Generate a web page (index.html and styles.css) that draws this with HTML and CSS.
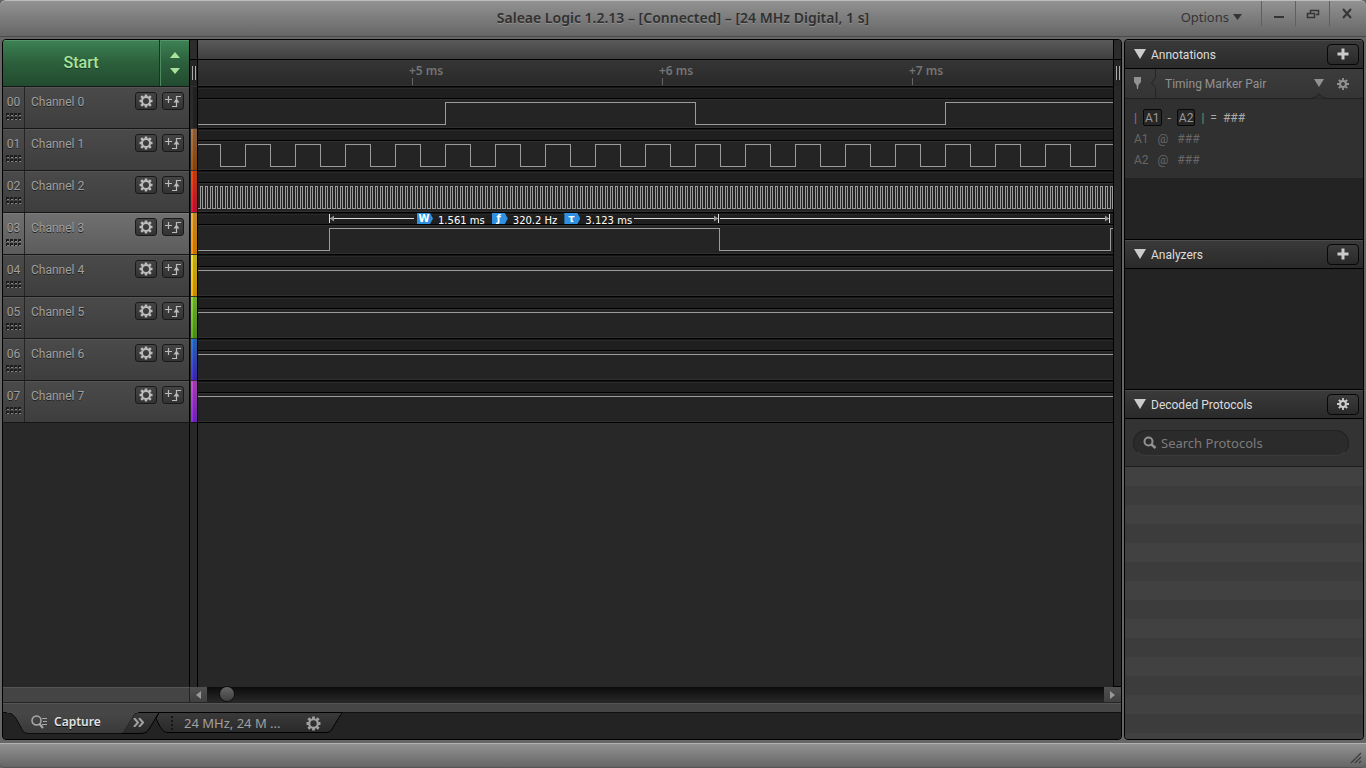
FILE: index.html
```html
<!DOCTYPE html>
<html lang="en">
<head>
<meta charset="utf-8">
<title>Saleae Logic 1.2.13</title>
<link rel="stylesheet" href="styles.css">
</head>
<body>
<svg class="defs" aria-hidden="true">
  <defs>
    <symbol id="gear" viewBox="0 0 14 14">
      <path d="M7 .5v3M7 10.500v3M.5 7h3M10.500 7h3M2.200 2.200l2 2M9.800 9.800l2 2M11.800 2.200l-2 2M4.200 9.800l-2 2" stroke="currentColor" stroke-width="2.600"/>
      <circle cx="7" cy="7" r="4" fill="none" stroke="currentColor" stroke-width="2"/>
    </symbol>
    <symbol id="cog" viewBox="0 0 12 12">
      <path d="M6 0v3M6 9v3M0 6h3M9 6h3M1.800 1.800l2 2M8.200 8.200l2 2M10.200 1.800l-2 2M3.800 8.200l-2 2" stroke="currentColor" stroke-width="1.800"/>
      <circle cx="6" cy="6" r="2.900" fill="none" stroke="currentColor" stroke-width="2"/>
    </symbol>
    <symbol id="trigger" viewBox="0 0 16 14">
      <path d="M0 5.500h7M3.500 2v7M7 12.500h4.500V2.500H16" fill="none" stroke="currentColor" stroke-width="1.200"/>
      <path d="M8.500 8.500L11.500 4.500l3 4z" fill="currentColor"/>
    </symbol>
    <symbol id="plus" viewBox="0 0 12 12">
      <path d="M6 .5v11M.5 6h11" stroke="currentColor" stroke-width="3"/>
    </symbol>
    <symbol id="down" viewBox="0 0 12 10"><path d="M0 0h12L6 10z" fill="currentColor"/></symbol>
  </defs>
</svg>

<header class="titlebar">
  <h1>Saleae Logic 1.2.13 – [Connected] – [24 MHz Digital, 1 s]</h1>
  <div class="window-tools">
    <button class="options">Options <svg width="9" height="6"><path d="M0 0h9L4.500 6z" fill="currentColor"/></svg></button>
    <button class="win" aria-label="Minimize"><svg width="12" height="12"><path d="M1 9h10" stroke="currentColor" stroke-width="2"/></svg></button>
    <button class="win" aria-label="Restore"><svg width="14" height="12"><path d="M4.500 5V2.500h8v4H10" fill="none" stroke="currentColor" stroke-width="1.500"/><path d="M1.500 5.500h7v4h-7z" fill="none" stroke="currentColor" stroke-width="1.500"/></svg></button>
    <button class="win" aria-label="Close"><svg width="12" height="12"><path d="M2 1l8 9M10 1l-8 9" stroke="currentColor" stroke-width="2"/></svg></button>
  </div>
</header>

<main class="main">
  <section class="capture">
    <div class="workspace">
      <div class="channels">
        <div class="start">
          <button class="start-btn">Start</button>
          <button class="start-step" aria-label="Capture settings"><svg width="10" height="22"><path d="M0 6L5 0l5 6zM0 16h10l-5 6z" fill="currentColor"/></svg></button>
        </div>
        <div id="channel-list"></div>
      </div>
      <div class="split" id="split-left"><div class="split-top"></div><div class="split-grip"></div></div>
      <div class="plot">
        <div class="overview"></div>
        <div class="ruler"><span>+5 ms</span><span>+6 ms</span><span>+7 ms</span></div>
        <div id="lanes"></div>
      </div>
      <div class="split split-right"><div class="split-top"></div><div class="split-grip"></div></div>
    </div>
    <div class="scroll">
      <div class="scroll-pad"></div>
      <button class="scroll-btn" aria-label="Scroll left"><svg width="5" height="8"><path d="M5 0v8L0 4z" fill="currentColor"/></svg></button>
      <div class="track"><div class="thumb"></div></div>
      <button class="scroll-btn" aria-label="Scroll right"><svg width="5" height="8"><path d="M0 0v8l5-4z" fill="currentColor"/></svg></button>
    </div>
    <div class="tabs">
      <svg class="tab-shapes" width="344" height="30" aria-hidden="true">
        <defs>
          <linearGradient id="tab" x2="0" y2="1"><stop stop-color="#484848"/><stop offset="1" stop-color="#383838"/></linearGradient>
          <linearGradient id="tab2" x2="0" y2="1"><stop stop-color="#3a3a3a"/><stop offset="1" stop-color="#292929"/></linearGradient>
        </defs>
        <path d="M115 21.500c4 0 6-3 8-6l6-10c2-3 3-5 7-5h21c-2 1-3 3-4 5l-6 10c-2 4-5 6-9 6z" fill="url(#tab2)" stroke="#000"/>
        <path d="M156 .5h184c-2 1-3 3-4 5l-6 10c-2 4-4 5-7 5H165c-4 0-6-3-8-6l-4-8z" fill="url(#tab2)" stroke="#000"/>
        <path d="M0 0h5c4 1 6 3 8 6l5 9c2 4 4 7 9 7h88c4 0 6-3 8-6l6-10c2-4 3-5 7-6z" fill="url(#tab)"/>
        <path d="M0 .5h3c5 0 8 3 10 6l5 9c2 4 3 6 8 6h92" fill="none" stroke="#0b0b0b"/>
        <path d="M4 0h131" stroke="#464646" stroke-width="2"/>
      </svg>
      <button class="tab tab-capture"><svg width="17" height="14"><g fill="none" stroke="currentColor"><circle cx="5.500" cy="5.500" r="4.500" stroke-width="1.500"/><path d="M8.500 9l3.500 4" stroke-width="2"/><path d="M11 3.500h5M12 6.500h4M11 9.500h5"/></g></svg><span>Capture</span></button>
      <button class="tab tab-more" aria-label="More tabs"><svg width="11" height="9"><path d="M1 0l4 4.500L1 9M6 0l4 4.500L6 9" fill="none" stroke="currentColor" stroke-width="2"/></svg></button>
      <button class="tab tab-session"><span class="tab-dots"></span><span class="session-name">24 MHz, 24 M ...</span><svg width="15" height="15"><use href="#gear"/></svg></button>
    </div>
  </section>

  <aside class="side">
    <section class="panel panel-notes">
      <div class="panel-head"><svg width="12" height="10"><use href="#down"/></svg><h2>Annotations</h2><button aria-label="Add annotation"><svg width="12" height="12"><use href="#plus"/></svg></button></div>
      <div class="marker-head">
        <svg width="31" height="29"><path d="M9 8h7v5l-2.500 3-.5 4h-1l-.5-4L9 13z" fill="#929292"/><path d="M30.500 0v9l-4 5 4 5v10" fill="none" stroke="#252525"/></svg>
        <span>Timing Marker Pair</span>
        <svg width="10" height="12"><path d="M0 1h10L5 9z" fill="#929292"/></svg>
        <svg width="12" height="12" class="marker-gear"><use href="#cog"/></svg>
        <svg class="notch" width="16" height="6"><path d="M0 5.500l4-1L8 1l4 3.500 4 1" fill="#303030" stroke="#202020"/></svg>
      </div>
      <div class="marker-body">
        <p class="formula"><span class="bar-a">|</span><b>A1</b><span>-</span><b>A2</b><span class="bar-b">|</span><span>=</span><span>###</span></p>
        <p class="value"><span>A1</span><span>@</span><span>###</span></p>
        <p class="value"><span>A2</span><span>@</span><span>###</span></p>
      </div>
    </section>
    <section class="panel panel-analyzers">
      <div class="panel-head"><svg width="12" height="10"><use href="#down"/></svg><h2>Analyzers</h2><button aria-label="Add analyzer"><svg width="12" height="12"><use href="#plus"/></svg></button></div>
    </section>
    <section class="panel panel-decoded">
      <div class="panel-head"><svg width="12" height="10"><use href="#down"/></svg><h2>Decoded Protocols</h2><button aria-label="Protocol settings"><svg width="12" height="12"><use href="#cog"/></svg></button></div>
      <div class="search-row"><label class="search"><svg width="14" height="14"><circle cx="5.500" cy="5.500" r="4" fill="none" stroke="currentColor" stroke-width="2"/><path d="M8.500 8.500l4 3.500" stroke="currentColor" stroke-width="2.500"/></svg><input type="text" placeholder="Search Protocols" aria-label="Search Protocols"></label></div>
      <div class="stripes"></div>
    </section>
  </aside>
</main>
<footer class="statusbar"><svg width="12" height="12"><path d="M1 11L11 1M5 11l6-6M9 11l2-2" stroke="#3c3c3c" stroke-width="1.200"/></svg></footer>
<script src="app.js"></script>
</body>
</html>
```
FILE: styles.css
```css
* { box-sizing: border-box; }
html, body { height: 100%; }
body {
  margin: 0;
  display: flex;
  flex-direction: column;
  background: #666;
  color: #a0a0a0;
  font: 12px/16px Roboto, "Liberation Sans", sans-serif;
  overflow: hidden;
}
h1, h2, p { margin: 0; }
svg { display: block; flex: none; }
.defs { position: absolute; width: 0; height: 0; }
button {
  margin: 0;
  padding: 0;
  border: 0;
  background: none;
  color: inherit;
  font: inherit;
}

/* title bar */
.titlebar {
  flex: none;
  height: 37px;
  display: grid;
  grid-template-columns: 1fr auto 1fr;
  background: linear-gradient(#929292, #666);
  border-top: 1px solid #bcbcbc;
  border-bottom: 1px solid #4a4a4a;
  border-radius: 6px 6px 0 0;
}
.titlebar h1 {
  grid-column: 2;
  padding-top: 7px;
  color: #303030;
  font: 600 14px/20px "Noto Sans", sans-serif;
  text-shadow: 0 1px 0 #909090;
}
.window-tools { display: flex; justify-content: flex-end; padding-right: 3px; color: #343434; }
.options {
  display: flex;
  align-items: center;
  gap: 4px;
  padding: 0 19px 4px 0;
  font: 13px/20px "Noto Sans", sans-serif;
}
.win {
  width: 34px;
  height: 25px;
  display: flex;
  align-items: center;
  justify-content: center;
  border-left: 1px solid #5f5f5f;
}

.main { flex: 1; min-height: 0; display: flex; gap: 2px; padding: 2px 2px 3px; }
.capture {
  flex: 1;
  min-width: 0;
  display: flex;
  flex-direction: column;
  border: 1px solid #000;
  border-radius: 4px;
  background: #232323;
  overflow: hidden;
}
.workspace { flex: 1; min-height: 0; display: flex; background: #282828; }

/* channel list */
.channels { flex: none; width: 186px; }
.start {
  display: flex;
  height: 46px;
  background: linear-gradient(#3d8253, #2c5f3c 50%, #224b2f);
  color: #a9e39b;
  box-shadow: inset 0 1px #57976a;
}
.start-btn { flex: 1; font-size: 16px; font-weight: 500; border-right: 1px solid #17371f; text-shadow: 0 1px #17371f; }
.start-step { width: 29px; display: flex; align-items: center; justify-content: center; border-left: 1px solid #4d8a5f; }
.channel {
  height: 42px;
  display: flex;
  border-top: 1px solid #161616;
  background: linear-gradient(#4a4a4a, #3e3e3e);
  box-shadow: inset 0 1px #555;
}
.channel:last-child { height: 43px; border-bottom: 1px solid #161616; }
.channel.active { background: linear-gradient(#707070, #5c5c5c); box-shadow: inset 0 1px #7c7c7c; }
.index { width: 22px; padding-top: 7px; border-right: 1px solid #252525; text-align: center; text-shadow: 0 1px #222; }
.index svg { margin: 3px auto 0; }
.label { flex: 1; padding: 7px 0 0 6px; text-shadow: 0 1px #222; }
.tool {
  width: 22px;
  height: 18px;
  margin: 5px 5px 0 0;
  display: flex;
  align-items: center;
  justify-content: center;
  border: 1px solid #191919;
  border-radius: 3px;
  background: linear-gradient(#444, #333);
  color: #bbb;
}

/* dividers */
.split { flex: none; width: 9px; border: solid #000; border-width: 0 1px; background: #282828; }
.split-top { height: 20px; border-bottom: 1px solid #000; background: #2c2c2c; }
.split-grip {
  height: 26px;
  background: linear-gradient(90deg, #aaa 1px, #222 1px 3px, #aaa 3px) center / 4px 14px no-repeat, #252525;
}
.split-right { width: 8px; border-width: 0 0 1px 1px; }
.swatch { height: 42px; margin-left: 1px; border-top: 1px solid #333; box-shadow: inset -4px 0 rgba(0, 0, 0, .22); }
.swatch:last-child { height: 43px; border-bottom: 1px solid #111; }

/* waveform area */
.plot { flex: 1; min-width: 0; }
.overview { height: 20px; border-bottom: 1px solid #000; background: linear-gradient(#5a5a5a, #404040); }
.ruler {
  height: 26px;
  display: flex;
  padding-left: 211px;
  overflow: hidden;
  background: linear-gradient(#363636, #292929);
  color: #747474;
  font: 600 12px/22px "Noto Sans", sans-serif;
  border-bottom: 1px solid #333;
}
.ruler span { flex: none; width: 250px; background: linear-gradient(#666, #666) 3px 18px / 1px 8px no-repeat; }
.lane {
  position: relative;
  height: 42px;
  border-top: 1px solid #000;
  background: linear-gradient(#151515 1px, #2a2a2a 1px 2px, #1f1f1f 2px 11px, #000 11px 12px, #303030 12px 13px, #242424 13px 40px, #303030 40px);
}
.lane:last-child { height: 43px; border-bottom: 1px solid #000; }
.wave { width: 100%; height: 41px; }
.wave path { fill: none; stroke: #9b9b9b; stroke-width: 1; shape-rendering: crispEdges; }
.wave .measure { stroke: #ddd; }
.wave .arrow { fill: #999; stroke: none; shape-rendering: auto; }
.measures {
  position: absolute;
  top: 0;
  left: 219px;
  display: flex;
  gap: 7px;
  color: #fff;
  font: 10px/15px "DejaVu Sans", sans-serif;
}
.measures span { display: flex; gap: 5px; }
.measures b {
  width: 16px;
  height: 11px;
  padding-right: 2px;
  background: #2f8fe0;
  clip-path: polygon(0 0, 13px 0, 100% 50%, 13px 100%, 0 100%);
  line-height: 11px;
  text-align: center;
}

/* horizontal scroll */
.scroll { flex: none; height: 16px; display: flex; border-bottom: 1px solid #252525; background: #444; }
.scroll-pad { width: 187px; border-top: 1px solid #555; border-right: 1px solid #222; }
.scroll-btn { width: 17px; display: flex; align-items: center; justify-content: center; background: linear-gradient(#505050, #404040); color: #999; }
.track { flex: 1; padding-left: 13px; background: linear-gradient(#0c0c0c, #272727); }
.thumb { width: 14px; height: 14px; border-radius: 50%; background: linear-gradient(#666, #3f3f3f); box-shadow: 0 0 0 1px #111; }

/* session tabs */
.tabs { position: relative; flex: none; height: 36px; display: flex; padding-top: 9px; background: linear-gradient(#555 1px, #464646 1px 9px, #111 9px 10px, #232323 10px); }
.tab-shapes { position: absolute; top: 9px; left: 0; }
.tab { position: relative; height: 20px; display: flex; align-items: center; }
.tab-capture { width: 128px; padding-left: 28px; gap: 6px; color: #aaa; font: 600 12px/16px "Noto Sans", sans-serif; text-shadow: 0 1px #111; }
.tab-capture span { color: #e2e2e2; }
.tab-more { width: 35px; padding-left: 2px; }
.tab-session { height: 22px; gap: 11px; padding-left: 5px; font: 13px/16px "Noto Sans", sans-serif; }
.tab-dots { width: 2px; height: 14px; background: repeating-linear-gradient(#161616 0 2px, transparent 2px 4px); }
.session-name { width: 111px; text-align: left; }

/* right sidebar */
.side { flex: none; width: 240px; display: flex; flex-direction: column; border: 1px solid #000; border-radius: 4px; background: #232323; overflow: hidden; }
.panel-head {
  height: 29px;
  display: flex;
  align-items: center;
  gap: 5px;
  padding: 0 4px 0 9px;
  border-bottom: 1px solid #000;
  background: linear-gradient(#3a3a3a, #2a2a2a);
  box-shadow: inset 0 1px #4c4c4c;
  color: #ccc;
}
.panel + .panel .panel-head { height: 30px; border-top: 1px solid #000; }
.panel-head h2 { flex: 1; padding-top: 1px; font-size: 12px; font-weight: 400; line-height: 16px; color: #ddd; }
.panel-head button {
  width: 32px;
  height: 21px;
  display: flex;
  align-items: center;
  justify-content: center;
  border: 1px solid #080808;
  border-radius: 4px;
  background: linear-gradient(#3c3c3c, #292929);
}
.panel-notes { flex: none; height: 199px; }
.panel-analyzers { flex: none; height: 150px; }
.panel-decoded { flex: 1; min-height: 0; display: flex; flex-direction: column; }
.marker-head { position: relative; height: 30px; display: flex; align-items: center; background: linear-gradient(#3c3c3c, #343434); border-bottom: 1px solid #202020; color: #929292; }
.marker-head span { flex: 1; padding-left: 9px; }
.marker-gear { margin: 0 14px 0 13px; }
.notch { position: absolute; right: 36px; bottom: -1px; }
.marker-body { height: 79px; padding: 9px; background: #303030; color: #aaa; }
.marker-body p { display: flex; height: 21px; line-height: 21px; }
.formula { gap: 6px; }
.formula b { height: 17px; margin-top: 1px; padding: 0 1px; border: 1px solid #080808; border-radius: 2px; background: #272727; color: #999; font-weight: 400; line-height: 17px; }
.bar-a { color: #a06a9c; }
.bar-b { color: #6f9a6a; }
.value { gap: 9px; color: #666; }
.search-row { flex: none; height: 48px; padding: 11px 14px 0 8px; border-bottom: 1px solid #1d1d1d; background: #333; }
.search { height: 26px; display: flex; align-items: center; gap: 4px; padding-left: 9px; border: 1px solid #222; border-bottom-color: #3c3c3c; border-radius: 13px; background: #2b2b2b; color: #929292; }
.search input { flex: 1; min-width: 0; padding: 0; border: 0; outline: 0; background: none; color: #ccc; font: 13px/18px "Noto Sans", sans-serif; }
.search input::placeholder { color: #7c7c7c; opacity: 1; }
.stripes { flex: 1; background: repeating-linear-gradient(#414141 0 19px, #3c3c3c 19px 38px); }

.statusbar {
  flex: none;
  height: 25px;
  display: flex;
  align-items: center;
  justify-content: flex-end;
  padding: 4px 4px 0;
  border-top: 1px solid #b0b0b0;
  border-bottom: 1px solid #555;
  background: linear-gradient(#919191, #666);
  border-radius: 0 0 5px 5px;
}
```
FILE: app.js
```js
const SPAN = 4000;
const HIGH = 15.5;
const LOW = 37.5;

// Builds a square wave from its starting level and the x positions of its edges.
function square(startHigh, edges) {
  let high = startHigh;
  let d = `M-1 ${high ? HIGH : LOW}`;
  for (const x of edges) {
    high = !high;
    d += `H${x + 0.5}V${high ? HIGH : LOW}`;
  }
  return d + `H${SPAN}`;
}

function every(first, step) {
  const edges = [];
  for (let x = first; x < SPAN; x += step) edges.push(x);
  return edges;
}

const fast = every(2, 5).flatMap(x => [x, x + 2]);
const flat = square(true, []);
const channels = [
  { colors: ['#2b2b2b', '#2b2b2b'], wave: square(false, every(247, 250)) },
  { colors: ['#b07a50', '#a5560f'], wave: square(true, every(22, 25)) },
  { colors: ['#f55010', '#ec1440'], wave: square(false, fast) },
  { colors: ['#f0b040', '#ff9500'], wave: square(false, [131, 521, 912, 1302]), active: true },
  { colors: ['#f0e030', '#ffb400'], wave: flat },
  { colors: ['#90dc40', '#60b020'], wave: flat },
  { colors: ['#3080e0', '#4c30d8'], wave: flat },
  { colors: ['#d050d8', '#8c2cea'], wave: flat }
];

const dots = '<svg width="15" height="8"><g fill="#1c1c1c"><path d="M0 0h3v3H0zM4 0h3v3H4zM8 0h3v3H8zM12 0h3v3h-3zM0 4h3v3H0zM4 4h3v3H4zM8 4h3v3H8zM12 4h3v3h-3z"/></g><path d="M1 2h2v1H1zM5 2h2v1H5zM9 2h2v1H9zM13 2h2v1h-2zM1 6h2v1H1zM5 6h2v1H5zM9 6h2v1H9zM13 6h2v1h-2z" fill="#858585"/></svg>';

const measureLines = '<path class="measure" d="M131.500 1v9M132 5.500H216M436 5.500H520M520.500 1v9M522 5.500H911M911.500 1v9"/><path class="arrow" d="M132 5.500l4-3v6zM520 5.500l-4-3v6zM911 5.500l-4-3v6z"/>';
const measureText = '<div class="measures"><span><b>W</b>1.561 ms</span><span><b>ƒ</b>320.2 Hz</span><span><b>τ</b>3.123 ms</span></div>';

const list = document.getElementById('channel-list');
const lanes = document.getElementById('lanes');
const split = document.getElementById('split-left');

channels.forEach((channel, i) => {
  list.insertAdjacentHTML('beforeend', `<div class="channel${channel.active ? ' active' : ''}">
    <div class="index">0${i}${dots}</div><div class="label">Channel ${i}</div>
    <button class="tool" aria-label="Channel ${i} settings"><svg width="14" height="14"><use href="#gear"/></svg></button>
    <button class="tool" aria-label="Channel ${i} trigger"><svg width="16" height="14"><use href="#trigger"/></svg></button></div>`);
  split.insertAdjacentHTML('beforeend', `<div class="swatch" style="background-image:linear-gradient(${channel.colors})"></div>`);
  lanes.insertAdjacentHTML('beforeend', `<div class="lane"><svg class="wave"><path d="${channel.wave}"/>${channel.active ? measureLines : ''}</svg>${channel.active ? measureText : ''}</div>`);
});
```
